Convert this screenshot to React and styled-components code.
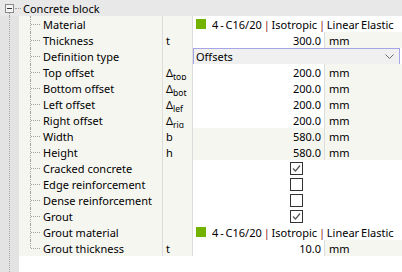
import React from 'react';
import styled, { createGlobalStyle } from 'styled-components';

const GlobalStyle = createGlobalStyle`
  body {
    margin: 0;
    background: #ffffff;
    font-family: 'Noto Sans', 'Segoe UI', sans-serif;
    font-size: 11px;
    color: #000000;
  }
`;

const Panel = styled.div`
  width: 402px;
  height: 272px;
  display: flex;
  flex-direction: column;
  background: #ffffff;
  overflow: hidden;
`;

const HeaderRow = styled.div`
  height: 16px;
  display: flex;
  align-items: center;
  background: #e8e8e8;
`;

const Toggle = styled.div`
  width: 19px;
  height: 16px;
  position: relative;
  flex-shrink: 0;
  .box {
    position: absolute;
    left: 5px;
    top: 4px;
    width: 7px;
    height: 7px;
    border: 1px solid #8a8a8a;
    background: #f4f4f4;
  }
  .box::after {
    content: '';
    position: absolute;
    left: 1px;
    right: 1px;
    top: 3px;
    height: 1px;
    background: #333;
  }
  .stem {
    position: absolute;
    left: 9px;
    top: 13px;
    bottom: 0;
    border-left: 1px dotted #9a9a9a;
  }
  .arm {
    position: absolute;
    left: 15px;
    width: 6px;
    top: 8px;
    border-top: 1px dotted #9a9a9a;
  }
`;

const Title = styled.span`
  margin-left: 4px;
`;

const Body = styled.div`
  display: flex;
  flex: 1;
`;

const Gutter = styled.div`
  width: 19px;
  flex-shrink: 0;
  background: #e3e3e3;
  position: relative;
  &::before {
    content: '';
    position: absolute;
    left: 9px;
    top: 0;
    bottom: 0;
    border-left: 1px dotted #a8a8a8;
  }
`;

const Rows = styled.div`
  flex: 1;
  display: flex;
  flex-direction: column;
`;

const Row = styled.div`
  height: 16px;
  display: flex;
  align-items: stretch;
`;

const NameCell = styled.div`
  width: 143px;
  flex-shrink: 0;
  background: #f6f6f1;
  position: relative;
  display: flex;
  align-items: center;
  padding-left: 24px;
  box-sizing: border-box;
  &::before {
    content: '';
    position: absolute;
    left: 11px;
    top: 0;
    height: ${(p) => (p.$last ? '8px' : '16px')};
    border-left: 1px dotted #a0a0a0;
  }
  &::after {
    content: '';
    position: absolute;
    left: 12px;
    top: 8px;
    width: 9px;
    border-top: 1px dotted #a0a0a0;
  }
`;

const SymbolCell = styled.div`
  width: 31px;
  flex-shrink: 0;
  box-sizing: border-box;
  border-left: 1px solid #dcdcdc;
  border-right: 1px solid #dcdcdc;
  background: #f6f6f1;
  padding-left: 3px;
  display: flex;
  align-items: center;
  sub {
    font-size: 8.5px;
    vertical-align: -3px;
    line-height: 0;
  }
`;

const ValueCell = styled.div`
  width: 132px;
  flex-shrink: 0;
  box-sizing: border-box;
  background: ${(p) => (p.$ro ? '#f6f6f1' : '#ffffff')};
  border-right: 1px solid #dcdcdc;
  display: flex;
  align-items: center;
  justify-content: flex-end;
  padding-right: 3px;
`;

const UnitCell = styled.div`
  flex: 1;
  background: #f6f6f1;
  display: flex;
  align-items: center;
  padding-left: 4px;
`;

const WideCell = styled.div`
  flex: 1;
  display: flex;
  align-items: center;
  justify-content: ${(p) => (p.$center ? 'center' : 'flex-start')};
  background: #ffffff;
  padding-right: ${(p) => (p.$center ? '2px' : '0')};
`;

const Swatch = styled.span`
  width: 10px;
  height: 10px;
  background: #72b300;
  margin: 0 6px 0 3px;
  flex-shrink: 0;
`;

const MaterialText = styled.span`
  word-spacing: -1px;
  white-space: nowrap;
`;

const Sep = styled.span`
  color: #8b1c1c;
`;

const Select = styled.div`
  flex: 1;
  margin-right: 2px;
  border: 1px solid #a6a6e6;
  background: #f0f0f0;
  display: flex;
  align-items: center;
  justify-content: space-between;
  padding: 0 5px 0 2px;
  box-sizing: border-box;
`;

const Box = styled.span`
  width: 13px;
  height: 13px;
  box-sizing: border-box;
  border: 1px solid #333333;
  background: #ffffff;
  display: flex;
`;

function Check({ on }) {
  return (
    <Box>
      {on && (
        <svg width="11" height="11" viewBox="0 0 11 11">
          <polyline points="2,5.5 4.5,8 9,2.5" fill="none" stroke="#555" strokeWidth="1.2" />
        </svg>
      )}
    </Box>
  );
}

function Material() {
  return (
    <WideCell>
      <Swatch />
      <MaterialText>
        4 - C16/20 <Sep>|</Sep> Isotropic <Sep>|</Sep> Linear Elastic
      </MaterialText>
    </WideCell>
  );
}

const Delta = ({ s }) => (
  <span>
    Δ<sub>{s}</sub>
  </span>
);

const rows = [
  { name: 'Material', kind: 'material' },
  { name: 'Thickness', sym: 't', value: '300.0', unit: 'mm' },
  { name: 'Definition type', kind: 'select' },
  { name: 'Top offset', sym: <Delta s="top" />, value: '200.0', unit: 'mm' },
  { name: 'Bottom offset', sym: <Delta s="bot" />, value: '200.0', unit: 'mm' },
  { name: 'Left offset', sym: <Delta s="lef" />, value: '200.0', unit: 'mm' },
  { name: 'Right offset', sym: <Delta s="rig" />, value: '200.0', unit: 'mm' },
  { name: 'Width', sym: 'b', value: '580.0', unit: 'mm', ro: true },
  { name: 'Height', sym: 'h', value: '580.0', unit: 'mm', ro: true },
  { name: 'Cracked concrete', kind: 'check', on: true },
  { name: 'Edge reinforcement', kind: 'check' },
  { name: 'Dense reinforcement', kind: 'check' },
  { name: 'Grout', kind: 'check', on: true },
  { name: 'Grout material', kind: 'material' },
  { name: 'Grout thickness', sym: 't', value: '10.0', unit: 'mm' },
];

function renderValue(r) {
  if (r.kind === 'material') return <Material />;
  if (r.kind === 'select')
    return (
      <WideCell>
        <Select>
          <span>Offsets</span>
          <svg width="9" height="5" viewBox="0 0 9 5">
            <polyline points="0.5,0.5 4.5,4.5 8.5,0.5" fill="none" stroke="#6b6b6b" strokeWidth="1" />
          </svg>
        </Select>
      </WideCell>
    );
  if (r.kind === 'check')
    return (
      <WideCell $center>
        <Check on={r.on} />
      </WideCell>
    );
  return (
    <>
      <ValueCell $ro={r.ro}>{r.value}</ValueCell>
      <UnitCell>{r.unit}</UnitCell>
    </>
  );
}

export default function App() {
  return (
    <>
      <GlobalStyle />
      <Panel>
        <HeaderRow>
          <Toggle>
            <span className="box" />
            <span className="arm" />
            <span className="stem" />
          </Toggle>
          <Title>Concrete block</Title>
        </HeaderRow>
        <Body>
          <Gutter />
          <Rows>
            {rows.map((r, i) => (
              <Row key={r.name}>
                <NameCell $last={i === rows.length - 1}>{r.name}</NameCell>
                <SymbolCell>{r.sym}</SymbolCell>
                {renderValue(r)}
              </Row>
            ))}
          </Rows>
        </Body>
      </Panel>
    </>
  );
}
